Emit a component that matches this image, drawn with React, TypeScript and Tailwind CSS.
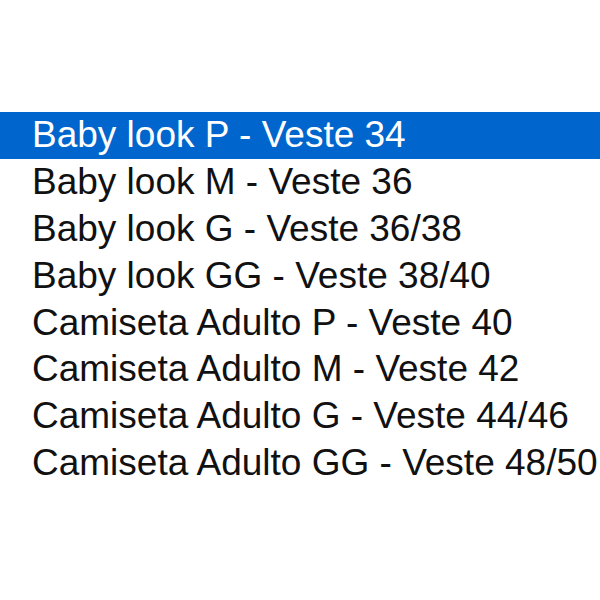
const options = [
  'Baby look P - Veste 34',
  'Baby look M - Veste 36',
  'Baby look G - Veste 36/38',
  'Baby look GG - Veste 38/40',
  'Camiseta Adulto P - Veste 40',
  'Camiseta Adulto M - Veste 42',
  'Camiseta Adulto G - Veste 44/46',
  'Camiseta Adulto GG - Veste 48/50',
];

export default function App() {
  const selected = 0;

  return (
    <div className="w-[600px] h-[600px] bg-white overflow-hidden pt-[112px] font-['Liberation_Sans',Arial,sans-serif]">
      <ul className="flex flex-col">
        {options.map((opt, i) => (
          <li
            key={opt}
            className={
              i === selected
                ? 'h-[46.875px] leading-[46.875px] pl-[32px] text-[37px] whitespace-nowrap bg-[#0066cd] text-white'
                : 'h-[46.875px] leading-[46.875px] pl-[32px] text-[37px] whitespace-nowrap text-[#111]'
            }
          >
            {opt}
          </li>
        ))}
      </ul>
    </div>
  );
}
